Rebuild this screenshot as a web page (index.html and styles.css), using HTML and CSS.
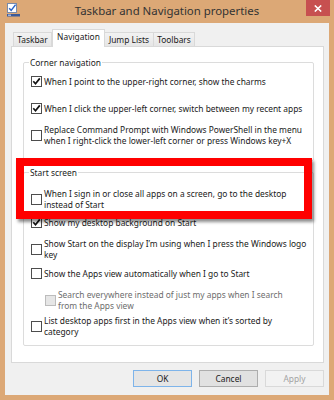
FILE: index.html
```html
<!DOCTYPE html>
<html>
<head>
<meta charset="utf-8">
<link rel="stylesheet" href="styles.css">
</head>
<body>
<div class="window">
  <div class="titlebar">
    <div class="tb-left">
      <svg class="app-icon" width="14" height="14" viewBox="0 0 14 14">
        <rect x="0.5" y="0.5" width="9" height="9" fill="#fff" stroke="#7a8aa8"/>
        <path d="M2.2 5.2 L4.2 7.4 L8.6 1.6" fill="none" stroke="#2a64c8" stroke-width="1.5"/>
        <rect x="0" y="11" width="13" height="2.5" fill="#3a5a9a"/>
        <rect x="1" y="11.5" width="3" height="1.5" fill="#9bb6e6"/>
      </svg>
    </div>
    <div class="title">Taskbar and Navigation properties</div>
    <div class="tb-right">
      <div class="close">
        <svg width="8" height="7" viewBox="0 0 8 7"><path d="M0.8 0.5 L7.2 6.5 M7.2 0.5 L0.8 6.5" stroke="#fff" stroke-width="1.6"/></svg>
      </div>
    </div>
  </div>
  <div class="client">
    <div class="tabs">
      <div class="tab t1">Taskbar</div>
      <div class="tab t2 active">Navigation</div>
      <div class="tab t3">Jump Lists</div>
      <div class="tab t4">Toolbars</div>
    </div>
    <div class="panel">
      <fieldset class="group corner">
        <legend>Corner navigation</legend>
        <div class="opt r1"><span class="cb checked"><svg viewBox="0 0 9 9"><path d="M1.3 4.3 L3.5 6.8 L7.8 1.4"/></svg></span><span class="lbl">When I point to the upper-right corner, show the charms</span></div>
        <div class="opt r2"><span class="cb checked"><svg viewBox="0 0 9 9"><path d="M1.3 4.3 L3.5 6.8 L7.8 1.4"/></svg></span><span class="lbl">When I click the upper-left corner, switch between my recent apps</span></div>
        <div class="opt r3"><span class="cb"></span><span class="lbl">Replace Command Prompt with Windows PowerShell in the menu<br>when I right-click the lower-left corner or press Windows key+X</span></div>
      </fieldset>
      <fieldset class="group start">
        <legend>Start screen</legend>
        <div class="opt r4"><span class="cb"></span><span class="lbl">When I sign in or close all apps on a screen, go to the desktop<br>instead of Start</span></div>
        <div class="opt r5"><span class="cb checked"><svg viewBox="0 0 9 9"><path d="M1.3 4.3 L3.5 6.8 L7.8 1.4"/></svg></span><span class="lbl">Show my desktop background on Start</span></div>
        <div class="opt r6"><span class="cb"></span><span class="lbl">Show Start on the display I’m using when I press the Windows logo<br>key</span></div>
        <div class="opt r7"><span class="cb"></span><span class="lbl">Show the Apps view automatically when I go to Start</span></div>
        <div class="opt r8 sub disabled"><span class="cb"></span><span class="lbl">Search everywhere instead of just my apps when I search<br>from the Apps view</span></div>
        <div class="opt r9"><span class="cb"></span><span class="lbl">List desktop apps first in the Apps view when it’s sorted by<br>category</span></div>
      </fieldset>
    </div>
    <div class="buttons">
      <div class="btn default">OK</div>
      <div class="btn">Cancel</div>
      <div class="btn disabled">Apply</div>
    </div>
  </div>
  <div class="highlight"></div>
</div>
</body>
</html>
```
FILE: styles.css
```css
html, body {
  margin: 0;
  padding: 0;
  background: #dca876;
}
body {
  font-family: "Noto Sans", "Open Sans", sans-serif;
  font-size: 8.4px;
  color: #1a1a1a;
}
.window {
  position: relative;
  width: 334px;
  height: 400px;
  background: #dca876;
  overflow: hidden;
}
.titlebar {
  height: 23px;
  display: grid;
  grid-template-columns: 1fr auto 1fr;
  align-items: start;
}
.tb-left {
  padding: 3px 0 0 7px;
}
.app-icon {
  display: block;
}
.title {
  font-size: 11.4px;
  line-height: 23px;
  color: #333;
  margin-top: -1px;
  white-space: nowrap;
}
.tb-right {
  display: flex;
  justify-content: flex-end;
  padding-right: 4px;
}
.close {
  width: 24px;
  height: 16px;
  background: #c75050;
  display: flex;
  align-items: center;
  justify-content: center;
}
.close svg {
  display: block;
}
.client {
  margin: 0 5px;
  background: #f0f0f0;
  height: 372px;
  box-sizing: border-box;
  padding: 0 5px 0 6px;
  display: flex;
  flex-direction: column;
}
.tabs {
  height: 23px;
  display: flex;
  align-items: flex-end;
  padding-left: 2px;
}
.tab {
  height: 14px;
  box-sizing: border-box;
  border: 1px solid #d9d9d9;
  border-bottom: none;
  background: linear-gradient(#f2f2f2, #e6e6e6);
  line-height: 13px;
  text-align: center;
  white-space: nowrap;
}
.t1 { width: 39px; }
.t2 { width: 53px; }
.t3 { width: 49px; border-left: none; }
.t4 { width: 41px; border-left: none; }
.tab.active {
  height: 18px;
  background: #fff;
  margin-bottom: -1px;
  position: relative;
  z-index: 1;
  line-height: 14px;
  border-left: 1px solid #d9d9d9;
}
.panel {
  background: #fff;
  border: 1px solid #d9d9d9;
  padding: 0 9px 16px 11px;
}
.group {
  margin: 0;
  border: 1px solid #dcdcdc;
  border-radius: 2px;
  padding: 0 8px 0 7px;
  min-width: 0;
}
.group legend {
  line-height: 11px;
  padding: 0 1px;
  margin-left: -2px;
}
.corner {
  margin-top: 10px;
  padding-top: 8px;
  padding-bottom: 14px;
}
.start {
  margin-top: 6px;
  padding-top: 10px;
  padding-bottom: 8px;
}
.opt {
  display: flex;
  align-items: center;
  gap: 2px;
}
.lbl {
  line-height: 11px;
  white-space: nowrap;
}
.cb {
  width: 11px;
  height: 11px;
  box-sizing: border-box;
  border: 1px solid #4d4d4d;
  background: #fff;
  flex: none;
  display: flex;
  align-items: center;
  justify-content: center;
}
.cb svg {
  width: 9px;
  height: 9px;
  display: block;
}
.cb svg path {
  fill: none;
  stroke: #111;
  stroke-width: 1.7;
}
.r2 { margin-top: 16px; }
.r3 { margin-top: 10px; }
.r5 { margin-top: 7px; }
.r6 { margin-top: 10px; }
.r7 { margin-top: 8px; }
.r8 { margin-top: 10px; }
.r9 { margin-top: 4px; }
.sub { padding-left: 14px; }
.disabled .cb {
  border-color: #bcbcbc;
  background: #e6e6e6;
}
.disabled .lbl {
  color: #6d6d6d;
}
.buttons {
  margin-top: 7px;
  display: flex;
  justify-content: flex-end;
  gap: 7px;
}
.btn {
  width: 59px;
  height: 17px;
  box-sizing: border-box;
  border: 1px solid #adadad;
  background: #e1e1e1;
  text-align: center;
  line-height: 15px;
}
.btn.default {
  border-color: #7eb4ea;
  background: #e5e5e5;
}
.btn.disabled {
  border-color: #d9d9d9;
  background: #f2f2f2;
  color: #a3a3a3;
}
.highlight {
  position: absolute;
  left: 16px;
  top: 158px;
  width: 296px;
  height: 61px;
  box-sizing: border-box;
  border: 8px solid #ff0000;
  box-shadow: 2px 3px 3px rgba(0, 0, 0, 0.45);
}
```
